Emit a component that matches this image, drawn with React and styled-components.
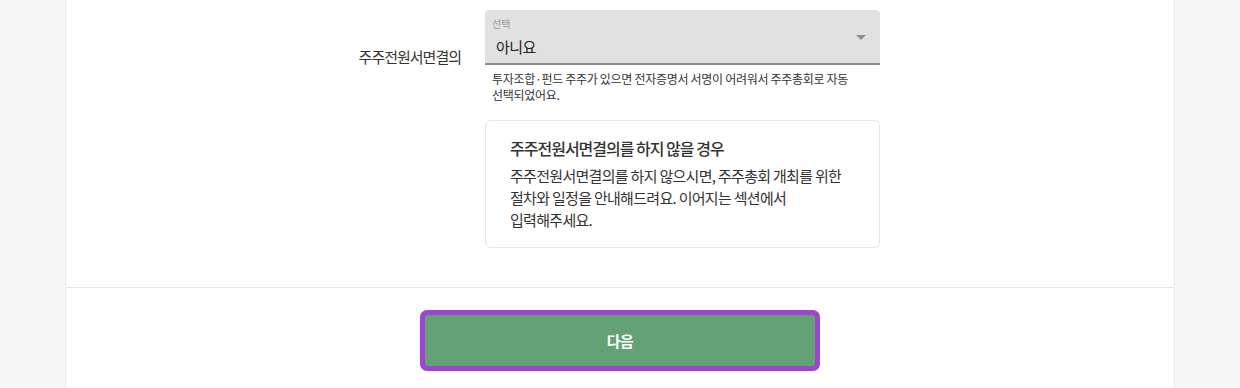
import React from "react";
import styled, { createGlobalStyle } from "styled-components";

const Global = createGlobalStyle`
  html, body { margin: 0; padding: 0; background: #f6f6f6; }
  body { font-family: "Noto Sans CJK KR", "Noto Sans", sans-serif; color: #333; }
  * { box-sizing: border-box; }
`;

const Page = styled.div`
  height: 388px;
  overflow: hidden;
  display: flex;
  justify-content: center;
`;

const Panel = styled.main`
  width: 1110px;
  background: #fff;
  border-left: 1px solid #ebebeb;
  border-right: 1px solid #ebebeb;
  display: flex;
  flex-direction: column;
`;

const Section = styled.section`
  padding: 10px 0 39px;
  border-bottom: 1px solid #e6e6e6;
`;

const Row = styled.div`
  display: grid;
  grid-template-columns: 1fr 395px 294px;
`;

const Label = styled.div`
  text-align: right;
  padding: 36px 24px 0 0;
  font-size: 15px;
  line-height: 22px;
  color: #333;
  letter-spacing: -1px;
`;

const Field = styled.div`
  display: flex;
  flex-direction: column;
`;

const Select = styled.div`
  position: relative;
  height: 55px;
  background: #e1e1e1;
  border-radius: 4px 4px 0 0;
  border-bottom: 2px solid #8c8c8c;
  padding: 7px 11px 0;
`;

const SelectLabel = styled.div`
  font-size: 10px;
  line-height: 14px;
  color: #9a9a9a;
  margin-left: -4px;
`;

const SelectValue = styled.div`
  font-size: 15px;
  line-height: 22px;
  margin-top: 5px;
  color: #222;
  letter-spacing: -0.6px;
`;

const Arrow = styled.span`
  position: absolute;
  right: 14px;
  top: 25px;
  width: 0;
  height: 0;
  border-left: 5px solid transparent;
  border-right: 5px solid transparent;
  border-top: 5px solid #8a8a8a;
`;

const Helper = styled.p`
  margin: 6px 0 0;
  padding: 0 14px 0 7px;
  font-size: 12px;
  line-height: 16px;
  color: #333;
  letter-spacing: -0.3px;
  word-break: keep-all;
`;

const Card = styled.div`
  margin-top: 17px;
  border: 1px solid #e6e6e6;
  border-radius: 6px;
  padding: 15px 24px 16px 24px;
`;

const CardTitle = styled.h3`
  margin: 0 0 5px;
  font-size: 16px;
  line-height: 24px;
  font-weight: 500;
  color: #333;
  letter-spacing: -1px;
`;

const CardBody = styled.p`
  margin: 0;
  font-size: 15px;
  line-height: 22px;
  color: #333;
  letter-spacing: -0.7px;
  word-break: keep-all;
`;

const Footer = styled.div`
  display: flex;
  justify-content: center;
  padding-top: 22px;
`;

const NextButton = styled.button`
  width: 400px;
  height: 61px;
  border: 5px solid #9d45d2;
  border-radius: 7px;
  background: #62a274;
  color: #fff;
  font-family: inherit;
  font-size: 15px;
  font-weight: 700;
  letter-spacing: -0.5px;
  cursor: pointer;
`;

export default function App() {
  return (
    <>
      <Global />
      <Page>
        <Panel>
          <Section>
            <Row>
              <Label>주주전원서면결의</Label>
              <Field>
                <Select>
                  <SelectLabel>선택</SelectLabel>
                  <SelectValue>아니요</SelectValue>
                  <Arrow />
                </Select>
                <Helper>
                  투자조합·펀드 주주가 있으면 전자증명서 서명이 어려워서 주주총회로 자동 선택되었어요.
                </Helper>
                <Card>
                  <CardTitle>주주전원서면결의를 하지 않을 경우</CardTitle>
                  <CardBody>
                    주주전원서면결의를 하지 않으시면, 주주총회 개최를 위한 절차와 일정을 안내해드려요. 이어지는 섹션에서 입력해주세요.
                  </CardBody>
                </Card>
              </Field>
              <div />
            </Row>
          </Section>
          <Footer>
            <NextButton>다음</NextButton>
          </Footer>
        </Panel>
      </Page>
    </>
  );
}
